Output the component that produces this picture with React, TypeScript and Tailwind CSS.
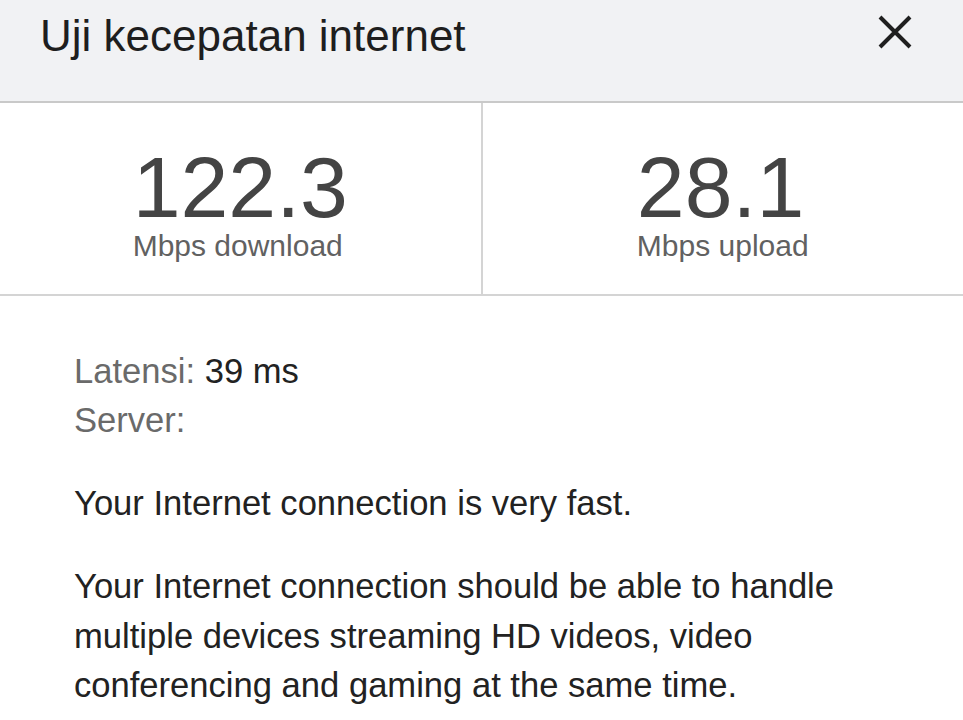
const font = { fontFamily: '"Liberation Sans", Arial, sans-serif' }

const Stat = ({ value, label }: { value: string; label: string }) => {
	return (
		<div className="flex-1 flex justify-center pt-[44px] pb-[33px]">
			<div className="flex flex-col">
				<span className="text-[86px] leading-[80px] text-[#444444]">{value}</span>
				<span className="text-[30px] leading-[30px] text-[#616161] mt-[4px]">{label}</span>
			</div>
		</div>
	)
}

export default function App() {
	return (
		<div className="w-[963px] h-[720px] bg-white overflow-hidden" style={font}>
			<header className="h-[103px] bg-[#f1f2f4] border-b-2 border-[#c9c9c9] flex justify-between items-start pl-[40px] pr-[51px] pt-[14px]">
				<h1 className="text-[44px] leading-none text-[#1e1e1e]">Uji kecepatan internet</h1>
				<svg width="34" height="34" viewBox="0 0 34 34" className="mt-[1px]">
					<path d="M2 2 L32 32 M32 2 L2 32" stroke="#1f1f1f" strokeWidth="4" strokeLinecap="butt" fill="none" />
				</svg>
			</header>
			<section className="flex border-b-2 border-[#d4d4d4]">
				<Stat value="122.3" label="Mbps download" />
				<div className="w-[2px] bg-[#d4d4d4]" />
				<Stat value="28.1" label="Mbps upload" />
			</section>
			<div className="pl-[74px] pr-8 pt-[51px] text-[34.6px] leading-[49px] text-[#222222]">
				<p>
					<span className="text-[#6a6a6a]">Latensi:</span> 39 ms
				</p>
				<p className="text-[#6a6a6a]">Server:</p>
				<p className="mt-[34px]">Your Internet connection is very fast.</p>
				<p className="mt-[34px] leading-[49.5px]">
					Your Internet connection should be able to handle multiple devices streaming HD videos, video conferencing and gaming at the same time.
				</p>
			</div>
		</div>
	)
}
